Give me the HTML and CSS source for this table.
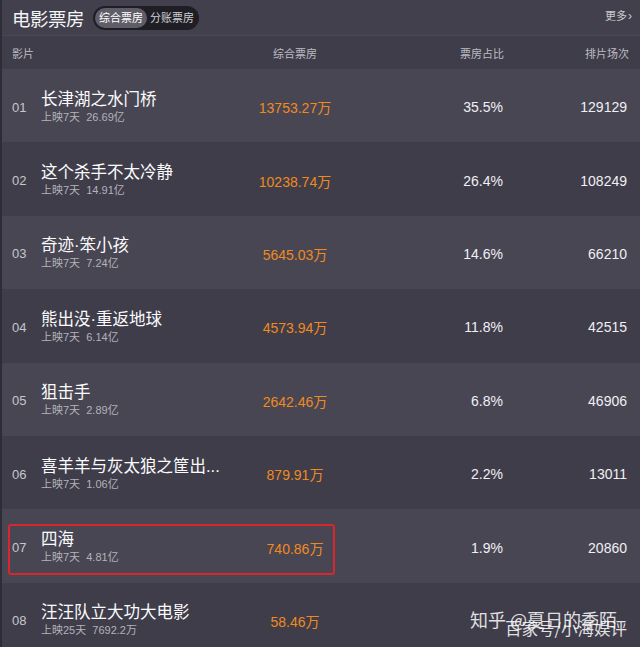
FILE: index.html
```html
<!DOCTYPE html>
<html lang="zh-CN">
<head>
    <meta charset="UTF-8">
    <meta name="viewport" content="width=device-width, initial-scale=1.0">
    <title>电影票房</title>
    <link rel="stylesheet" href="styles.css">
</head>
<body>
    <main class="board">
        <div class="topbar">
            <h1>电影票房</h1>
            <div class="switch">
                <span class="on">综合票房</span>
                <span>分账票房</span>
            </div>
            <a class="more">更多<span class="arrow">›</span></a>
        </div>

        <div class="row head">
            <div class="c-title">影片</div>
            <div class="c-box">综合票房</div>
            <div></div>
            <div class="c-pct">票房占比</div>
            <div class="c-cnt">排片场次</div>
        </div>

        <div class="row">
            <div class="num">01</div>
            <div class="film"><div class="name">长津湖之水门桥</div><div class="sub">上映7天&nbsp; 26.69亿</div></div>
            <div class="box">13753.27万</div>
            <div></div>
            <div class="pct">35.5%</div>
            <div class="cnt">129129</div>
        </div>
        <div class="row">
            <div class="num">02</div>
            <div class="film"><div class="name">这个杀手不太冷静</div><div class="sub">上映7天&nbsp; 14.91亿</div></div>
            <div class="box">10238.74万</div>
            <div></div>
            <div class="pct">26.4%</div>
            <div class="cnt">108249</div>
        </div>
        <div class="row">
            <div class="num">03</div>
            <div class="film"><div class="name">奇迹·笨小孩</div><div class="sub">上映7天&nbsp; 7.24亿</div></div>
            <div class="box">5645.03万</div>
            <div></div>
            <div class="pct">14.6%</div>
            <div class="cnt">66210</div>
        </div>
        <div class="row">
            <div class="num">04</div>
            <div class="film"><div class="name">熊出没·重返地球</div><div class="sub">上映7天&nbsp; 6.14亿</div></div>
            <div class="box">4573.94万</div>
            <div></div>
            <div class="pct">11.8%</div>
            <div class="cnt">42515</div>
        </div>
        <div class="row">
            <div class="num">05</div>
            <div class="film"><div class="name">狙击手</div><div class="sub">上映7天&nbsp; 2.89亿</div></div>
            <div class="box">2642.46万</div>
            <div></div>
            <div class="pct">6.8%</div>
            <div class="cnt">46906</div>
        </div>
        <div class="row">
            <div class="num">06</div>
            <div class="film"><div class="name">喜羊羊与灰太狼之筐出...</div><div class="sub">上映7天&nbsp; 1.06亿</div></div>
            <div class="box">879.91万</div>
            <div></div>
            <div class="pct">2.2%</div>
            <div class="cnt">13011</div>
        </div>
        <div class="row mark">
            <div class="num">07</div>
            <div class="film"><div class="name">四海</div><div class="sub">上映7天&nbsp; 4.81亿</div></div>
            <div class="box">740.86万</div>
            <div></div>
            <div class="pct">1.9%</div>
            <div class="cnt">20860</div>
            <span class="redbox"></span>
        </div>
        <div class="row">
            <div class="num">08</div>
            <div class="film"><div class="name">汪汪队立大功大电影</div><div class="sub">上映25天&nbsp; 7692.2万</div></div>
            <div class="box">58.46万</div>
            <div></div>
            <div class="pct"></div>
            <div class="cnt"></div>
        </div>

        <div class="wm wm1">知乎 @夏日的季陌</div>
        <div class="wm wm2">百家号/小海娱评</div>
    </main>
</body>
</html>
```

FILE: styles.css
```css
* {
    margin: 0;
    padding: 0;
    box-sizing: border-box;
}

body {
    background: #3f3d4a;
    font-family: "Liberation Sans", "Noto Sans CJK SC", sans-serif;
    overflow: hidden;
}

.board {
    position: relative;
    width: 640px;
    height: 647px;
    background: #3f3d4a;
    border-left: 2px solid #2e2c36;
    overflow: hidden;
}

.topbar {
    height: 36px;
    display: flex;
    align-items: center;
    padding-left: 10px;
    background: #42404c;
    border-bottom: 1px solid #4a4855;
}

.topbar h1 {
    font-size: 18.5px;
    font-weight: normal;
    color: #f4f4f6;
    letter-spacing: -0.5px;
}

.switch {
    display: flex;
    align-items: center;
    margin-left: 9px;
    height: 24px;
    padding: 2px;
    border-radius: 12px;
    background: #1f1e25;
    font-size: 11px;
    color: #cfcfd4;
}

.switch span {
    padding: 0 3px;
    line-height: 20px;
}

.switch .on {
    background: #5f5d68;
    border-radius: 10px;
    color: #fff;
    padding: 0 4px;
}

.more {
    margin-left: auto;
    margin-right: 8px;
    margin-top: -6px;
    font-size: 11px;
    color: #c9c9ce;
}

.arrow {
    font-size: 12px;
    margin-left: 1px;
}

.row {
    position: relative;
    display: grid;
    grid-template-columns: 39px 200px 108px 110px 46px 1fr;
    align-items: center;
    height: 73.4px;
    background: #484653;
}

.row:nth-of-type(even) {
    background: #3f3d4a;
}

.row.head {
    height: 33px;
    background: #3f3d4a;
    font-size: 11px;
    color: #bdbcc3;
}

.head .c-title {
    padding-left: 10px;
    grid-column: 1 / 3;
}

.head .c-box,
.head .c-pct {
    text-align: center;
    white-space: nowrap;
}

.head .c-cnt {
    text-align: right;
    padding-right: 11px;
}

.num {
    padding-left: 10px;
    font-size: 13px;
    color: #c6c6cc;
    padding-top: 3px;
}

.film {
    padding-top: 1px;
}

.name {
    font-size: 16.5px;
    color: #fbfbfd;
    line-height: 20px;
    white-space: nowrap;
}

.sub {
    font-size: 11px;
    color: #b3b2b9;
    line-height: 14px;
    margin-top: 1px;
}

.box {
    text-align: center;
    font-size: 14px;
    color: #f08a1f;
    padding-top: 3px;
}

.pct {
    text-align: right;
    font-size: 14px;
    color: #f0f0f3;
    padding-top: 3px;
    padding-right: 2px;
}

.cnt {
    text-align: right;
    font-size: 14px;
    color: #f0f0f3;
    padding-top: 3px;
    padding-right: 13px;
}

.redbox {
    position: absolute;
    left: 6px;
    top: 15px;
    width: 327px;
    height: 51px;
    border: 2px solid #d8262a;
    border-radius: 3px;
}

.wm {
    position: absolute;
    white-space: nowrap;
    color: rgba(255, 255, 255, 0.85);
    font-family: "Noto Sans CJK SC", sans-serif;
    font-size: 18px;
}

.wm1 {
    left: 468px;
    top: 606px;
}

.wm2 {
    left: 503px;
    top: 616px;
    font-size: 16.5px;
}
```
